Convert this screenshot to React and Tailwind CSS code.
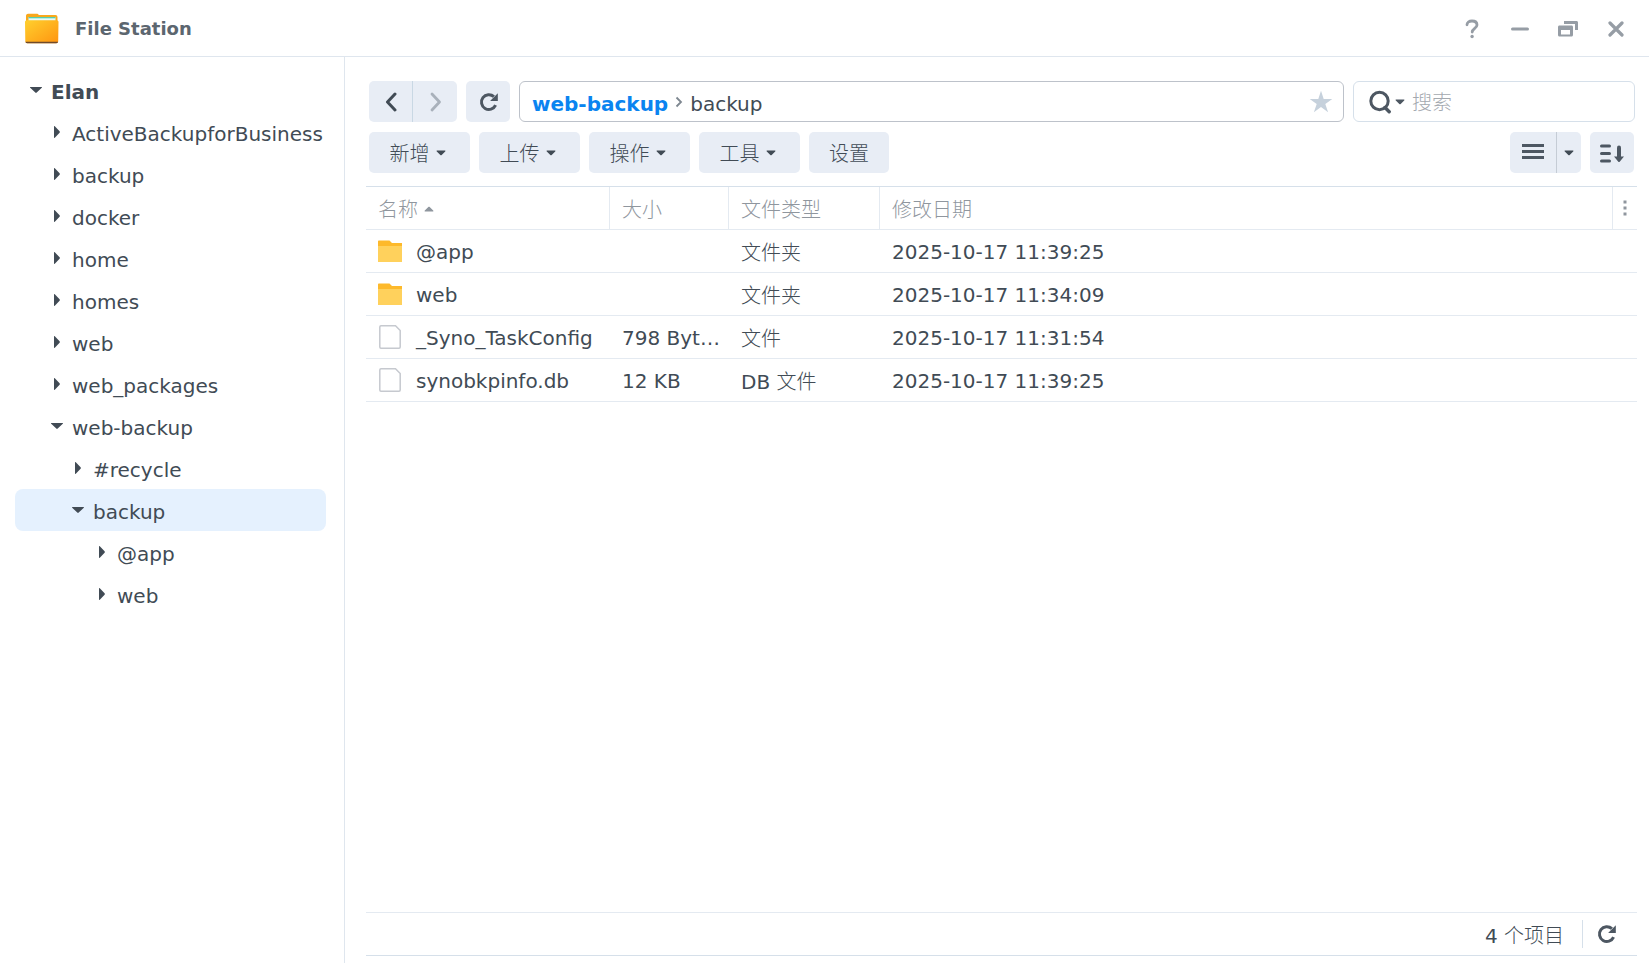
import { useState } from "react";

const TREE = [
  { name: "Elan", level: 0, open: true },
  { name: "ActiveBackupforBusiness", level: 1 },
  { name: "backup", level: 1 },
  { name: "docker", level: 1 },
  { name: "home", level: 1 },
  { name: "homes", level: 1 },
  { name: "web", level: 1 },
  { name: "web_packages", level: 1 },
  { name: "web-backup", level: 1, open: true },
  { name: "#recycle", level: 2 },
  { name: "backup", level: 2, open: true, selected: true },
  { name: "@app", level: 3 },
  { name: "web", level: 3 },
];

const INDENT = ["pl-3.5", "pl-[35px]", "pl-14", "pl-20"];

const FILES = [
  { name: "@app", folder: true, size: "", type: "文件夹", date: "2025-10-17 11:39:25" },
  { name: "web", folder: true, size: "", type: "文件夹", date: "2025-10-17 11:34:09" },
  { name: "_Syno_TaskConfig", size: "798 Bytes", type: "文件", date: "2025-10-17 11:31:54" },
  { name: "synobkpinfo.db", size: "12 KB", prefix: "DB ", type: "文件", date: "2025-10-17 11:39:25" },
];

const MENUS = ["新增", "上传", "操作", "工具"];

function Han({ children }) {
  return <span className="font-['Noto_Sans_CJK_SC',sans-serif] font-light">{children}</span>;
}

function Caret({ className = "" }) {
  return (
    <svg width="10" height="6" viewBox="0 0 10 6" className={className} aria-hidden="true">
      <path d="M1.2 0.5h7.6c.6 0 .8.6.4 1L5.7 4.9c-.4.4-1 .4-1.4 0L.8 1.5c-.4-.4-.2-1 .4-1z" fill="currentColor" />
    </svg>
  );
}

function TreeArrow({ open }) {
  return (
    <svg width="14" height="14" viewBox="0 0 14 14" className="shrink-0" aria-hidden="true">
      {open ? (
        <path d="M1.500 4h11c.5 0 .7.5.3.8L7.700 9.600c-.4.4-1 .4-1.400 0L1.200 4.800C.8 4.500 1 4 1.500 4z" fill="currentColor" />
      ) : (
        <path d="M4 1.500v11c0 .5.5.7.8.3l4.800-5.100c.4-.4.4-1 0-1.400L4.800 1.200C4.500.8 4 1 4 1.500z" fill="currentColor" />
      )}
    </svg>
  );
}

function Reload({ className = "" }) {
  return (
    <svg width="20" height="20" viewBox="0 0 20 20" className={className} aria-hidden="true">
      <path d="M16.600 13.200A7.400 7.400 0 1 1 14.900 4.700" fill="none" stroke="currentColor" strokeWidth="3" />
      <path d="M18.800 1.300v7.700h-7.700z" fill="currentColor" />
    </svg>
  );
}

function AppIcon() {
  return (
    <svg width="36" height="32" viewBox="0 0 36 32" aria-hidden="true">
      <defs>
        <linearGradient id="front" x1="0" y1="0" x2="1" y2="1">
          <stop offset="0" stopColor="#ffd02e" />
          <stop offset="1" stopColor="#ff9410" />
        </linearGradient>
      </defs>
      <path d="M2 2.500A2 2 0 0 1 4 .8h9.500l1.500 1.200h16.500a2 2 0 0 1 2 2v10H2z" fill="#f9a81b" />
      <rect x="4.500" y="4" width="27" height="8" fill="#eafaf6" />
      <rect x="4.500" y="4" width="27" height="1.300" fill="#55cfae" />
      <path d="M3 7.200h29.500c1.200 0 2.100.7 2 1.900L34.200 28.500a2 2 0 0 1-2 1.800H3.300a2 2 0 0 1-2-1.800L1 9.100c0-1.200.8-1.900 2-1.900z" fill="url(#front)" />
      <path d="M1.400 28.700h32.700a2 2 0 0 1-2 1.600H3.400a2 2 0 0 1-2-1.600z" fill="#6f4a2c" />
    </svg>
  );
}

function FileIcon({ folder }) {
  return folder ? (
    <svg width="24" height="22" viewBox="0 0 24 22" className="shrink-0" aria-hidden="true">
      <path d="M0 1.500C0 .8.500.5 1 .5h10.500l2.500 2.500h10V8H0z" fill="#fdb92b" />
      <path d="M0 6h24v16H0z" fill="#ffd15c" />
    </svg>
  ) : (
    <svg width="24" height="24" viewBox="0 0 24 24" className="shrink-0" aria-hidden="true">
      <path d="M3 .8h14.500l4.700 4.700V22c0 .7-.4 1.200-1.200 1.200H3c-.7 0-1.200-.5-1.200-1.200V2C1.800 1.300 2.300.8 3 .8z" fill="#fff" stroke="#c6c9cf" strokeWidth="1.500" />
    </svg>
  );
}

export default function App() {
  const [query, setQuery] = useState("");
  const btn = "flex h-[41px] items-center justify-center bg-[#e8edf5]";
  const th = "h-[43px] border-r border-[#e4eaf1] px-3 pt-0.5 text-left font-normal";
  return (
    <div className="flex min-h-screen flex-col bg-white font-['DejaVu_Sans','Noto_Sans_CJK_SC',sans-serif] text-xl leading-7 text-[#414b55]">
      <header className="flex h-[57px] shrink-0 items-center border-b border-[#dfe6ee] pt-0.5 pr-[21px] pl-6">
        <AppIcon />
        <h1 className="ml-[15px] text-lg font-bold text-[#5c666f]">File Station</h1>
        <div className="ml-auto flex items-center gap-6 text-[#969da5]">
          <button aria-label="帮助" className="flex size-6 items-center justify-center">
            <svg width="14" height="20" viewBox="0 0 14 20" aria-hidden="true">
              <path d="M2 5.800C2 3.500 4 2 7 2s5 1.600 5 4c0 3.200-4.800 3.400-4.800 7" fill="none" stroke="currentColor" strokeWidth="2.800" strokeLinecap="round" />
              <circle cx="7.100" cy="17.500" r="1.700" fill="currentColor" />
            </svg>
          </button>
          <button aria-label="最小化" className="flex size-6 items-center justify-center">
            <svg width="18" height="4" viewBox="0 0 18 4" aria-hidden="true">
              <rect y=".5" width="18" height="3" rx="1.500" fill="currentColor" />
            </svg>
          </button>
          <button aria-label="还原" className="flex size-6 items-center justify-center">
            <svg width="20" height="16" viewBox="0 0 20 16" aria-hidden="true">
              <path d="M6 0h12.500c.9 0 1.500.6 1.500 1.500V9h-3V3H6z" fill="currentColor" />
              <path fillRule="evenodd" d="M1.500 4.500h12c.9 0 1.500.6 1.500 1.500v8c0 .9-.6 1.500-1.500 1.500h-12C.6 15.500 0 14.900 0 14V6C0 5.100.6 4.500 1.500 4.500zM3 9v4.500h9V9z" fill="currentColor" />
            </svg>
          </button>
          <button aria-label="关闭" className="flex size-6 items-center justify-center">
            <svg width="16" height="16" viewBox="0 0 16 16" aria-hidden="true">
              <path d="M2 2l12 12M14 2L2 14" stroke="currentColor" strokeWidth="3.200" strokeLinecap="round" />
            </svg>
          </button>
        </div>
      </header>

      <div className="flex flex-1">
        <nav className="w-[345px] shrink-0 border-r border-[#dfe6ee] pt-3 pr-[18px] pl-[15px]">
          <ul>
            {TREE.map((n, i) => (
              <li key={i}>
                <button
                  className={`flex h-[42px] w-full items-center gap-2 rounded-lg text-left whitespace-nowrap ${INDENT[n.level]} ${
                    n.selected ? "bg-[#e5f1fe]" : ""
                  } ${n.level === 0 ? "font-bold" : ""}`}
                >
                  <TreeArrow open={n.open} />
                  <span className="pt-1">{n.name}</span>
                </button>
              </li>
            ))}
          </ul>
        </nav>

        <main className="flex min-w-0 flex-1 flex-col pt-6 pr-3 pb-[7px] pl-[21px]">
          <div className="flex gap-[9px] pr-0.5 pl-[3px]">
            <div className="flex">
              <button aria-label="后退" className={`${btn} w-11 rounded-l-[5px] border-r border-[#c9d8e4]`}>
                <svg width="12" height="20" viewBox="0 0 12 20" aria-hidden="true">
                  <path d="M10 2L2.500 10l7.500 8" fill="none" stroke="currentColor" strokeWidth="3" strokeLinejoin="round" strokeLinecap="round" />
                </svg>
              </button>
              <button aria-label="前进" className={`${btn} w-11 rounded-r-[5px] pl-0.5 text-[#a9b1bb]`}>
                <svg width="12" height="20" viewBox="0 0 12 20" aria-hidden="true">
                  <path d="M2 2l7.500 8L2 18" fill="none" stroke="currentColor" strokeWidth="2.800" strokeLinejoin="round" strokeLinecap="round" />
                </svg>
              </button>
            </div>
            <button aria-label="刷新" className={`${btn} w-11 rounded-[5px] pl-0.5 text-[#4d5762]`}>
              <Reload />
            </button>
            <div className="flex h-[41px] min-w-0 flex-1 items-center rounded-md border border-[#bdc2ca] pr-2.5 pl-3">
              <a href="#web-backup" className="pt-1 font-bold text-[#0a84f0]">web-backup</a>
              <svg width="8" height="12" viewBox="0 0 8 12" className="mx-[7px]" aria-hidden="true">
                <path d="M1.500 1.500L6 6l-4.500 4.500" fill="none" stroke="#7e8790" strokeWidth="1.800" />
              </svg>
              <a href="#backup" className="pt-1">backup</a>
              <button aria-label="收藏" className="ml-auto text-[#c6d1dc]">
                <svg width="24" height="24" viewBox="0 0 24 24" aria-hidden="true">
                  <path d="M12 .8l2.700 8.100h8.600l-7 5 2.800 8.300L12 17.100l-7.100 5.100 2.800-8.300-7-5h8.600z" fill="currentColor" />
                </svg>
              </button>
            </div>
            <div className="flex h-[41px] w-[282px] items-center rounded-md border border-[#d6e0ea] pl-[15px]">
              <button aria-label="搜索选项" className="flex items-center gap-1 text-[#4d5762]">
                <svg width="22" height="24" viewBox="0 0 22 24" aria-hidden="true">
                  <circle cx="10.500" cy="11" r="8.700" fill="none" stroke="currentColor" strokeWidth="3" />
                  <path d="M16 17.500l4.200 4.200" stroke="currentColor" strokeWidth="3.400" strokeLinecap="round" />
                </svg>
                <Caret />
              </button>
              <input
                aria-label="搜索"
                placeholder="搜索"
                value={query}
                onChange={(e) => setQuery(e.target.value)}
                className="ml-[7px] h-7 min-w-0 flex-1 bg-transparent font-['Noto_Sans_CJK_SC',sans-serif] font-light outline-none placeholder:text-[#a4a9af]"
              />
            </div>
          </div>

          <div className="mt-2.5 flex gap-[9px] pr-[3px] pl-[3px]">
            {MENUS.map((m) => (
              <button key={m} className={`${btn} w-[101px] gap-1.5 rounded-[5px] pr-1`}>
                <Han>{m}</Han>
                <Caret />
              </button>
            ))}
            <button className={`${btn} w-20 rounded-[5px]`}>
              <Han>设置</Han>
            </button>
            <div className="ml-auto flex">
              <button aria-label="列表视图" className={`${btn} w-[47px] rounded-l-[5px] border-r border-[#c5ccd5] pb-0.5 text-[#4d5762]`}>
                <svg width="22" height="16" viewBox="0 0 22 16" aria-hidden="true">
                  <path d="M0 1.500h22M0 7.500h22M0 13.500h22" stroke="currentColor" strokeWidth="3" />
                </svg>
              </button>
              <button aria-label="视图选项" className={`${btn} w-6 rounded-r-[5px]`}>
                <Caret />
              </button>
            </div>
            <button aria-label="排序" className={`${btn} w-11 rounded-[5px] text-[#4d5762]`}>
              <svg width="24" height="20" viewBox="0 0 24 20" aria-hidden="true">
                <path d="M1.500 3H9.500M1.500 10.500H9.500M1.500 18H9.500" stroke="currentColor" strokeWidth="3" strokeLinecap="round" />
                <path d="M19 4.500V15" stroke="currentColor" strokeWidth="4" strokeLinecap="round" />
                <path d="M14 13.500h10l-4.300 5.200c-.4.500-1 .5-1.400 0z" fill="currentColor" />
              </svg>
            </button>
          </div>

          <table className="mt-[13px] w-full table-fixed border-separate border-spacing-0 border-t border-[#d6e0ea]">
            <colgroup>
              <col className="w-[244px]" />
              <col className="w-[119px]" />
              <col className="w-[151px]" />
              <col />
              <col className="w-6" />
            </colgroup>
            <thead>
              <tr className="text-[#8f969e] *:border-b *:border-[#e4eaf1]">
                <th className={th} aria-sort="ascending">
                  <span className="flex items-center gap-1.5">
                    <Han>名称</Han>
                    <Caret className="rotate-180" />
                  </span>
                </th>
                <th className={th}><Han>大小</Han></th>
                <th className={th}><Han>文件类型</Han></th>
                <th className={th}><Han>修改日期</Han></th>
                <th>
                  <button aria-label="列选项" className="flex w-full justify-center">
                    <svg width="4" height="16" viewBox="0 0 4 16" aria-hidden="true">
                      <path d="M.5 .5h3v3h-3zM.5 6.500h3v3h-3zM.5 12.500h3v3h-3z" fill="currentColor" />
                    </svg>
                  </button>
                </th>
              </tr>
            </thead>
            <tbody>
              {FILES.map((f) => (
                <tr key={f.name} className="*:h-[43px] *:border-b *:border-[#e4eaf1]">
                  <td className="px-3">
                    <div className="flex items-center gap-[14px] whitespace-nowrap">
                      <FileIcon folder={f.folder} />
                      <span className="pt-0.5">{f.name}</span>
                    </div>
                  </td>
                  <td className="truncate pt-0.5 pr-2 pl-3">{f.size}</td>
                  <td className="px-3 pt-0.5">{f.prefix}<Han>{f.type}</Han></td>
                  <td className="px-3 pt-0.5" colSpan={2}>{f.date}</td>
                </tr>
              ))}
            </tbody>
          </table>

          <footer className="mt-auto flex h-11 items-center justify-end border-t border-b border-t-[#e4eaf1] border-b-[#d6e0ea] pr-5">
            <span className="pt-0.5">4 <Han>个项目</Han></span>
            <button aria-label="刷新列表" className="ml-[18px] flex h-7 items-center border-l border-[#d6e0ea] pl-[14px] text-[#4d5762]">
              <Reload />
            </button>
          </footer>
        </main>
      </div>
    </div>
  );
}
